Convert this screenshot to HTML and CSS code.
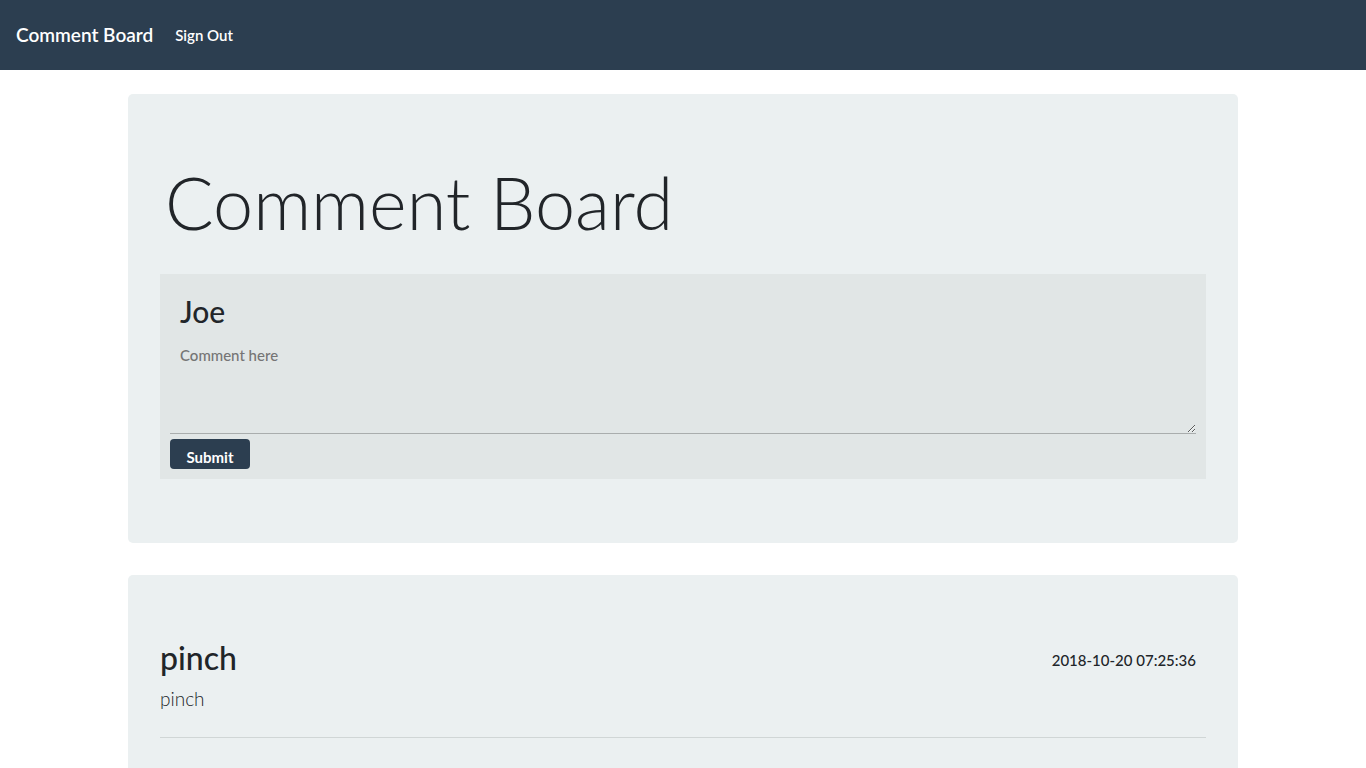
FILE: index.html
```html
<!DOCTYPE html>
<html lang="en">
<head>
<meta charset="utf-8">
<title>Comment Board</title>
<link rel="stylesheet" href="styles.css">
</head>
<body>
<nav class="navbar">
  <a class="brand" href="#">Comment Board</a>
  <a class="nav-link" href="#">Sign Out</a>
</nav>
<main class="container">
  <section class="panel">
    <h1 class="title">Comment Board</h1>
    <form class="comment-form">
      <label class="user-name" for="comment">Joe</label>
      <textarea class="comment-input" id="comment" placeholder="Comment here"></textarea>
      <button class="submit" type="submit">Submit</button>
    </form>
  </section>
  <section class="panel">
    <article class="comment">
      <header class="comment-head">
        <h2 class="author">pinch</h2>
        <time class="date" datetime="2018-10-20T07:25:36">2018-10-20 07:25:36</time>
      </header>
      <p class="comment-text">pinch</p>
    </article>
  </section>
</main>
</body>
</html>
```
FILE: styles.css
```css
* {
  box-sizing: border-box;
}

html {
  scrollbar-width: none;
}

body {
  margin: 0;
  background: #fff;
  color: #212529;
  font: 500 15px/24px Lato, sans-serif;
}

.navbar {
  display: flex;
  align-items: center;
  gap: 22px;
  min-height: 70px;
  padding: 0 16px;
  background: #2c3e50;
}

.brand,
.nav-link {
  color: #fff;
  font-weight: 600;
  text-decoration: none;
}

.brand {
  font-size: 19px;
}

.container {
  max-width: 1140px;
  margin: 24px auto 0;
  padding: 0 15px;
}

.panel {
  margin-bottom: 32px;
  padding: 64px 32px;
  border-radius: 5px;
  background: #ebf0f1;
}

.title {
  margin: 0 0 28px;
  padding: 0 5px;
  font-size: 72px;
  font-weight: 300;
  line-height: 88px;
}

.comment-form {
  display: flex;
  flex-direction: column;
  align-items: flex-start;
  padding: 10px;
  background: #e1e6e6;
}

.user-name {
  padding: 10px 10px 0;
  font-size: 30px;
  line-height: 34px;
}

.comment-input {
  display: block;
  width: 100%;
  height: 94px;
  margin: 12px 0 5px;
  padding: 3px 10px;
  border: 0;
  border-bottom: 1px solid #a9adad;
  outline: 0;
  background: transparent;
  color: #212529;
  font: inherit;
  resize: vertical;
}

.comment-input::placeholder {
  color: #757575;
}

.submit {
  min-width: 80px;
  height: 30px;
  padding: 6px 16px 0;
  border: 0;
  border-radius: 4px;
  background: #2c3e50;
  color: #fff;
  font: 700 15px/24px Lato, sans-serif;
}

.comment {
  padding-bottom: 24px;
  border-bottom: 1px solid #d0d6d6;
}

.comment-head {
  display: flex;
  align-items: flex-end;
  justify-content: space-between;
  padding-right: 10px;
}

.author {
  margin: 0;
  font-size: 32px;
  font-weight: 500;
  line-height: 38px;
}

.date {
  line-height: 34px;
}

.comment-text {
  margin: 8px 0 0;
  font-size: 19px;
  font-weight: 300;
  line-height: 28px;
}
```
